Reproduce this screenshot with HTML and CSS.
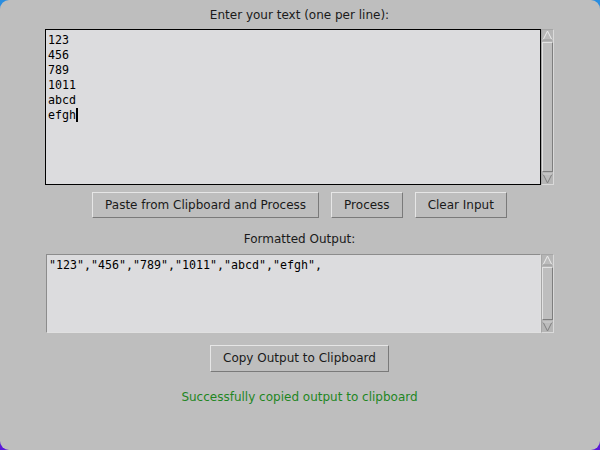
FILE: index.html
```html
<!DOCTYPE html>
<html>
<head>
<meta charset="utf-8">
<link rel="stylesheet" href="styles.css">
</head>
<body>
<div class="win">
  <div class="label">Enter your text (one per line):</div>
  <div class="textframe">
    <div class="text input"><div>123</div><div>456</div><div>789</div><div>1011</div><div>abcd</div><div>efgh<span class="caret"></span></div></div>
    <div class="sb">
      <svg class="arrow" width="11" height="11" viewBox="0 0 11 11"><polygon points="5.5,1 10,10 1,10" fill="#bcbcbc" stroke="#ececec" stroke-width="1"/><line x1="1" y1="10" x2="10" y2="10" stroke="#808080"/></svg>
      <div class="slider"></div>
      <svg class="arrow" width="11" height="11" viewBox="0 0 11 11"><polygon points="1,1 10,1 5.5,10" fill="#bcbcbc" stroke="#808080" stroke-width="1"/><line x1="1" y1="1" x2="10" y2="1" stroke="#ececec"/></svg>
    </div>
  </div>
  <div class="buttons">
    <div class="btn">Paste from Clipboard and Process</div>
    <div class="btn">Process</div>
    <div class="btn">Clear Input</div>
  </div>
  <div class="label label2">Formatted Output:</div>
  <div class="textframe outframe">
    <div class="text output">"123","456","789","1011","abcd","efgh",</div>
    <div class="sb">
      <svg class="arrow" width="11" height="11" viewBox="0 0 11 11"><polygon points="5.5,1 10,10 1,10" fill="#bcbcbc" stroke="#ececec" stroke-width="1"/><line x1="1" y1="10" x2="10" y2="10" stroke="#808080"/></svg>
      <div class="slider"></div>
      <svg class="arrow" width="11" height="11" viewBox="0 0 11 11"><polygon points="1,1 10,1 5.5,10" fill="#bcbcbc" stroke="#808080" stroke-width="1"/><line x1="1" y1="1" x2="10" y2="1" stroke="#ececec"/></svg>
    </div>
  </div>
  <div class="btn copy">Copy Output to Clipboard</div>
  <div class="status">Successfully copied output to clipboard</div>
</div>
</body>
</html>
```
FILE: styles.css
```css
html {
  margin: 0;
  height: 450px;
  background: linear-gradient(to bottom, #2a8ee0 0%, #2050c0 40%, #5a18d8 100%);
}
body {
  margin: 0;
  height: 450px;
  overflow: hidden;
  border-radius: 9px;
  background: #bebebe;
  font-family: "DejaVu Sans", sans-serif;
  font-size: 12px;
  color: #1a1a1a;
}
.win {
  display: flex;
  flex-direction: column;
  align-items: center;
  padding-top: 7px;
  padding-right: 1px;
}
.label {
  height: 16px;
  line-height: 16px;
}
.label2 {
  margin-top: 13px;
}
.textframe {
  display: flex;
  margin-top: 6px;
  width: 509px;
  height: 156px;
}
.outframe {
  margin-top: 7px;
  height: 79px;
  padding-left: 1px;
  width: 508px;
}
.text {
  flex: 1;
  background: #dcdcde;
  font-family: "DejaVu Sans Mono", monospace;
  font-size: 11.63px;
  line-height: 15px;
  color: #000;
  box-sizing: border-box;
}
.input {
  border: 1px solid #000;
  padding: 3px 2px;
}
.output {
  border: 1px solid;
  border-color: #8c8c8c #e0e0e0 #e0e0e0 #8c8c8c;
  padding: 3px 2px;
}
.caret {
  display: inline-block;
  width: 2px;
  height: 14px;
  background: #000;
  vertical-align: -3px;
}
.sb {
  width: 13px;
  box-sizing: border-box;
  border: 1px solid;
  border-color: #a6a6a6 #dadada #dadada #a6a6a6;
  background: #b6b6b6;
  display: flex;
  flex-direction: column;
}
.arrow {
  display: block;
  flex: none;
}
.slider {
  flex: 1;
  margin: 1px 0;
  border: 1px solid;
  border-color: #e2e2e2 #7e7e7e #7e7e7e #e2e2e2;
  background: #bebebe;
}
.buttons {
  display: flex;
  gap: 12px;
  margin-top: 7px;
}
.btn {
  height: 26px;
  line-height: 24px;
  box-sizing: border-box;
  padding: 0 12px;
  border: 1px solid;
  border-color: #e6e6e6 #7a7a7a #7a7a7a #e6e6e6;
  background: #bebebe;
  color: #1a1a1a;
  font-size: 12px;
}
.copy {
  margin-top: 12px;
  height: 27px;
  line-height: 25px;
}
.status {
  margin-top: 17px;
  line-height: 16px;
  color: #1f861f;
}
```
